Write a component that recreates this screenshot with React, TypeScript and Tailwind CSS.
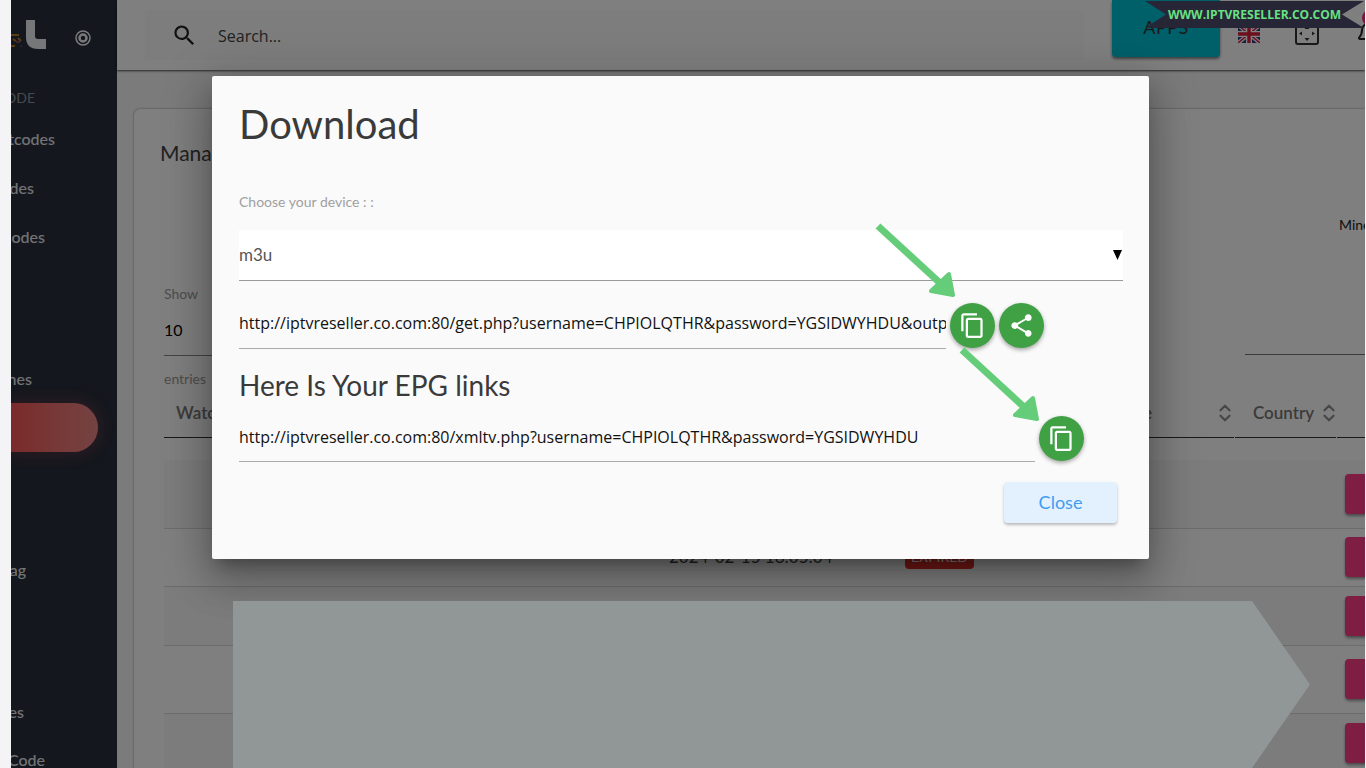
import { useState } from 'react'
import type { ReactNode } from 'react'
import { MdContentCopy, MdSearch, MdShare } from 'react-icons/md'
import { Bell, ChevronDown, ChevronUp } from 'lucide-react'

const M3U_LINK =
  'http://iptvreseller.co.com:80/get.php?username=CHPIOLQTHR&password=YGSIDWYHDU&output=ts'
const EPG_LINK = 'http://iptvreseller.co.com:80/xmltv.php?username=CHPIOLQTHR&password=YGSIDWYHDU'

const rows = [
  { date: '', status: '', height: 'h-[68px] bg-[#f8f8f8]' },
  { date: '2024-02-15 18:05:04', status: 'EXPIRED', height: 'h-[58px] bg-white' },
  { date: '', status: '', height: 'h-[59px] bg-[#f8f8f8]' },
  { date: '', status: '', height: 'h-[68px] bg-white' },
  { date: '', status: '', height: 'h-[60px] bg-[#f8f8f8]' },
]

function MenuItem({ label, width }: { label: string; width: string }) {
  return (
    <a
      href="#"
      className={`${width} flex h-12 items-center justify-end overflow-hidden text-base font-medium text-[#e4e6ea]`}
    >
      <span>{label}</span>
    </a>
  )
}

function Sidebar() {
  return (
    <aside className="flex w-[106px] shrink-0 flex-col overflow-hidden bg-[#292e3b]">
      <div className="flex h-[75px] shrink-0 items-center justify-between pr-[25px]">
        <svg className="mb-1 h-8 w-9" viewBox="0 0 36 32" fill="none" aria-label="Logo">
          <path d="M0 15h8M2 19l3 2M7 18l3 3M0 26h4" stroke="#b87a20" strokeWidth="2" />
          <path d="M5 22h4M10 26h1" stroke="#7a4a52" strokeWidth="2" />
          <path d="M15 0h9v16q0 3 3 3h8v10h-8q-12 0-12-12z" fill="#eceef2" />
        </svg>
        <svg
          className="size-[18px]"
          viewBox="0 0 18 18"
          fill="none"
          stroke="#f4f5f8"
          aria-label="Pin menu"
        >
          <circle cx="9" cy="9" r="7" strokeWidth="1.5" />
          <circle cx="9" cy="9" r="3.5" strokeWidth="2.5" />
        </svg>
      </div>
      <p className="flex h-10 w-6 shrink-0 items-start justify-end overflow-hidden pt-[13px] text-sm leading-5 text-[#8f939d]">
        ODE
      </p>
      <nav className="flex flex-col">
        <div className="flex flex-col gap-px">
          <MenuItem label="tcodes" width="w-11" />
          <MenuItem label="des" width="w-[23px]" />
          <MenuItem label="odes" width="w-[34px]" />
        </div>
        <div className="mt-[94px]">
          <MenuItem label="nes" width="w-[21px]" />
          <a
            href="#"
            aria-label="Active menu"
            className="block h-[49px] w-[87px] rounded-r-full bg-linear-to-r from-[#f45656] to-[#e88684] shadow-[0_0_14px_4px_rgba(244,90,110,0.2)]"
          />
        </div>
        <div className="mt-[94px]">
          <MenuItem label="ag" width="w-[15px]" />
        </div>
        <div className="mt-[94px]">
          <MenuItem label="es" width="w-[13px]" />
          <MenuItem label="Code" width="w-[34px]" />
        </div>
      </nav>
    </aside>
  )
}

function Flag() {
  return (
    <svg className="h-[18px] w-[22px]" viewBox="0 0 22 18" aria-label="English">
      <rect width="22" height="18" fill="#2b3f8c" />
      <path d="M0 0l22 18M22 0L0 18" stroke="#fff" strokeWidth="4" />
      <path d="M0 0l22 18M22 0L0 18" stroke="#d8203f" strokeWidth="1.4" />
      <path d="M11 0v18M0 9h22" stroke="#fff" strokeWidth="6" />
      <path d="M11 0v18M0 9h22" stroke="#d8203f" strokeWidth="3.4" />
    </svg>
  )
}

function TopBar() {
  return (
    <header className="flex h-[70px] shrink-0 bg-white pl-7 shadow-[0_1px_2px_rgba(0,0,0,0.7)]">
      <label className="my-2.5 flex flex-1 items-center bg-[#fafafa] pl-[26px]">
        <MdSearch className="size-[27px] shrink-0 text-[#222]" />
        <input
          type="text"
          placeholder="Search..."
          aria-label="Search"
          className="ml-5 w-full bg-transparent pt-0.5 font-['Open_Sans',sans-serif] text-base outline-none placeholder:text-[#444]"
        />
      </label>
      <button
        type="button"
        className="ml-7 h-[57px] w-[108px] rounded-b-sm bg-[#00c0d4] pb-1 text-lg tracking-wide text-[#333] shadow-[0_2px_3px_rgba(0,0,0,0.5)]"
      >
        APPS
      </button>
      <div className="flex h-[68px] w-[145px] shrink-0 items-center overflow-hidden pl-[18px]">
        <span className="shrink-0">
          <Flag />
        </span>
        <svg
          className="ml-[34px] size-[26px] shrink-0"
          viewBox="0 0 26 26"
          fill="none"
          stroke="#333"
          aria-label="Fullscreen"
        >
          <rect x="2" y="2" width="22" height="21" rx="2" strokeWidth="2" />
          <path
            d="M13 5l2.500 3h-5zM13 20l2.500-3h-5zM5 12.500l3-2v4zM21 12.500l-3-2v4z"
            fill="#333"
            stroke="none"
          />
        </svg>
        <div className="relative ml-9 shrink-0">
          <Bell className="size-6 text-[#222]" />
          <span className="absolute -top-3 left-1.5 size-4 rounded-full bg-[#f0307a]" />
        </div>
      </div>
    </header>
  )
}

function SortIcon() {
  return (
    <span className="flex shrink-0 flex-col items-center text-[#909090]">
      <ChevronUp className="-mb-1 size-[18px]" strokeWidth={3} />
      <ChevronDown className="-mt-1 size-[18px]" strokeWidth={3} />
    </span>
  )
}

function HeadCell({ children }: { children?: ReactNode }) {
  return (
    <th scope="col" className="pb-[22px] font-semibold">
      <div className="mr-px flex h-[49px] items-center border-b border-[#333]">{children}</div>
    </th>
  )
}

function UsersCard() {
  return (
    <section className="mt-[39px] ml-[17px] flex-1 overflow-hidden rounded-tl-md bg-white pl-[30px] shadow-[0_0_2px_rgba(0,0,0,0.5)]">
      <h1 className="-ml-1 pt-[30px] text-[21px] leading-7 text-[#444]">Manage Users</h1>
      <p className="mt-12 text-right text-sm leading-5 text-[#222]">
        <span className="inline-block w-[26px] overflow-hidden text-left align-top">Mine</span>
      </p>
      <div className="mt-[49px] flex justify-between">
        <label className="flex w-28 flex-col text-sm leading-5 text-[#9a9a9a]">
          Show
          <select className="h-[52px] w-full appearance-none border-b border-[#888] text-base text-black">
            <option>10</option>
          </select>
          <span className="mt-[13px]">entries</span>
        </label>
        <input
          type="search"
          aria-label="Filter users"
          className="h-[71px] w-[120px] border-b border-[#777] outline-none"
        />
      </div>
      <table className="w-[1272px] table-fixed text-left text-[17px] text-[#777]">
        <colgroup>
          <col className="w-[505px]" />
          <col className="w-[236px]" />
          <col className="w-[330px]" />
          <col className="w-[102px]" />
          <col />
        </colgroup>
        <thead>
          <tr>
            <HeadCell>
              <span className="pl-3">Watching</span>
            </HeadCell>
            <HeadCell />
            <HeadCell>
              <span className="ml-auto pr-16">e</span>
              <SortIcon />
            </HeadCell>
            <HeadCell>
              <span className="ml-[18px] mr-1.5">Country</span>
              <SortIcon />
            </HeadCell>
            <HeadCell />
          </tr>
        </thead>
        <tbody>
          {rows.map((row, i) => (
            <tr key={i} className={`${row.height} border-b border-[#d8d8d8]`}>
              <td />
              <td className="text-[#444]">{row.date}</td>
              <td>
                {row.status && (
                  <span className="block h-6 w-[69px] rounded-sm bg-[#e8322a] text-center text-sm leading-6 text-white">
                    {row.status}
                  </span>
                )}
              </td>
              <td />
              <td>
                <button
                  type="button"
                  aria-label="Row actions"
                  className="ml-2 block h-10 w-20 rounded-sm bg-[#fb3c84] shadow-[0_2px_3px_rgba(0,0,0,0.4)]"
                />
              </td>
            </tr>
          ))}
        </tbody>
      </table>
    </section>
  )
}

function Arrow({ className }: { className: string }) {
  return (
    <svg
      className={`pointer-events-none absolute h-[74px] w-20 ${className}`}
      viewBox="0 0 80 74"
      fill="#65cd79"
      stroke="#65cd79"
      aria-hidden="true"
    >
      <path d="M3 3L65 60" strokeWidth="7" />
      <path d="M74 51L78 72L56 68Z" strokeWidth="4" strokeLinejoin="round" />
    </svg>
  )
}

function RoundButton({ label, children }: { label: string; children: ReactNode }) {
  return (
    <button
      type="button"
      aria-label={label}
      className="flex size-[45px] items-center justify-center rounded-full bg-[#3fa044] text-white shadow-[0_2px_4px_rgba(0,0,0,0.35)]"
    >
      {children}
    </button>
  )
}

function DownloadDialog({ onClose }: { onClose: () => void }) {
  const [device, setDevice] = useState('m3u')

  return (
    <div
      role="dialog"
      aria-labelledby="download-title"
      className="w-full rounded-xs bg-[#fafafa] pt-6 pr-[26px] pb-9 pl-[27px] text-[#3a3a3a] shadow-[0_24px_38px_3px_rgba(0,0,0,0.14),0_9px_46px_8px_rgba(0,0,0,0.2),0_11px_15px_-7px_rgba(0,0,0,0.3)]"
    >
      <h2 id="download-title" className="text-[40px] leading-[48px]">
        Download
      </h2>
      <label htmlFor="device" className="mt-11 block text-sm leading-5 text-[#a0a0a0]">
        Choose your device : :
      </label>
      <div className="relative mt-[18px]">
        <select
          id="device"
          value={device}
          onChange={(e) => setDevice(e.target.value)}
          className="h-[51px] w-full appearance-none border-b border-[#999] bg-white text-[17px] text-[#555] outline-none"
        >
          <option value="m3u">m3u</option>
        </select>
        <svg
          className="pointer-events-none absolute top-5 right-px h-2.5 w-[9px]"
          viewBox="0 0 9 10"
          aria-hidden="true"
        >
          <path d="M0 0h9L4.500 10z" fill="#000" />
        </svg>
      </div>

      <div className="mt-[22px] flex items-start gap-1">
        <input
          readOnly
          aria-label="M3U link"
          value={M3U_LINK}
          className="h-[46px] w-4/5 border-b border-[#aaa] pb-1.5 font-['Open_Sans',sans-serif] text-base text-[#111] outline-none"
        />
        <div className="relative">
          <RoundButton label="Copy M3U link">
            <MdContentCopy className="size-[27px]" />
          </RoundButton>
          <Arrow className="-top-20 -left-[75px]" />
        </div>
        <RoundButton label="Share M3U link">
          <MdShare className="size-[27px]" />
        </RoundButton>
      </div>

      <h3 className="mt-5 text-[28px] leading-8">Here Is Your EPG links</h3>

      <div className="mt-[15px] flex items-start gap-1">
        <input
          readOnly
          aria-label="EPG link"
          value={EPG_LINK}
          className="h-[46px] w-[90%] border-b border-[#aaa] pb-1 font-['Open_Sans',sans-serif] text-base text-[#111] outline-none"
        />
        <div className="relative">
          <RoundButton label="Copy EPG link">
            <MdContentCopy className="size-[27px]" />
          </RoundButton>
          <Arrow className="-top-[69px] -left-20" />
        </div>
      </div>

      <div className="mt-5 mr-1.5 flex justify-end">
        <button
          type="button"
          onClick={onClose}
          className="h-[41px] w-[113px] rounded-sm bg-[#e3f1fe] pb-0.5 text-lg text-[#3f9df0] shadow-[0_2px_3px_rgba(0,0,0,0.25)]"
        >
          Close
        </button>
      </div>
    </div>
  )
}

export default function App() {
  const [open, setOpen] = useState(true)

  return (
    <div className="relative flex h-screen overflow-hidden bg-[#f4f4f6] pr-px pl-[11px] font-['Lato',sans-serif]">
      <div className="relative flex min-w-0 flex-1 overflow-hidden">
        <Sidebar />
        <main className="flex min-w-0 flex-1 flex-col bg-[#f6f6f6]">
          <TopBar />
          <UsersCard />
        </main>

        {/* Backdrop */}
        {open && (
          <div className="absolute inset-0 bg-black/50 pt-[76px] pr-[216px] pl-[201px]">
            <DownloadDialog onClose={() => setOpen(false)} />
          </div>
        )}
      </div>

      {/* Banner over the table rows */}
      <div className="absolute right-14 bottom-0 left-[233px] h-[167px] bg-[#919696] [clip-path:polygon(0_0,calc(100%-58px)_0,100%_50%,calc(100%-58px)_100%,0_100%)]" />

      {/* Site ribbon */}
      <a
        href="#"
        className="absolute top-px right-0.5 flex h-[27px] w-[219px] items-center justify-center bg-[#262637] font-['Open_Sans',sans-serif] text-xs font-bold text-[#68e083] [clip-path:polygon(0_0,100%_0,calc(100%-22px)_50%,100%_100%,0_100%,21px_50%)]"
      >
        WWW.IPTVRESELLER.CO.COM
      </a>
    </div>
  )
}
